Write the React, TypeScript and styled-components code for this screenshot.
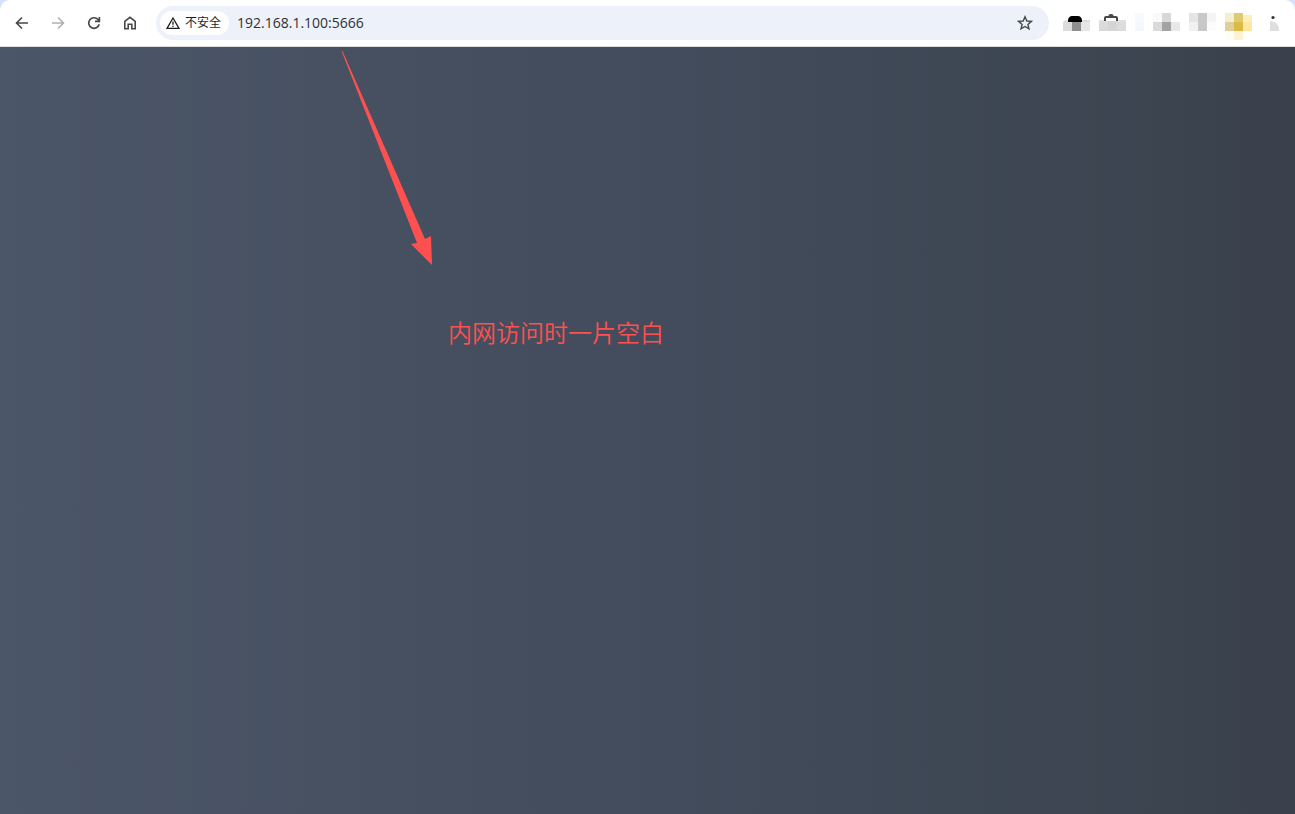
import React from "react";
import styled, { createGlobalStyle } from "styled-components";

const GlobalStyle = createGlobalStyle`
  * { box-sizing: border-box; }
  body {
    margin: 0;
    background: #d3e3fd;
    font-family: "Open Sans", "Noto Sans CJK SC", sans-serif;
  }
`;

const Page = styled.div`
  display: flex;
  flex-direction: column;
  min-height: 100vh;
`;

const Toolbar = styled.header`
  display: flex;
  align-items: center;
  gap: 12px;
  height: 47px;
  padding: 0 16px 1px 8px;
  background: #fff;
  border-bottom: 1px solid #dcdcdc;
  border-radius: 10px 10px 0 0;
`;

const Navigation = styled.nav`
  display: flex;
  gap: 8px;
`;

const IconButton = styled.button<{ $muted?: boolean }>`
  display: flex;
  align-items: center;
  justify-content: center;
  width: 28px;
  height: 28px;
  padding: 0;
  border: 0;
  border-radius: 50%;
  background: transparent;
  color: ${(p) => (p.$muted ? "#b0b0b0" : "#474747")};
`;

const AddressBar = styled.form`
  display: flex;
  flex: 1;
  align-items: center;
  height: 34px;
  padding: 0 10px 0 4px;
  border-radius: 17px;
  background: #edf1fa;
`;

const SecurityChip = styled.button`
  display: flex;
  align-items: center;
  gap: 5px;
  height: 24px;
  padding: 0 8px 0 6px;
  border: 0;
  border-radius: 12px;
  background: #fff;
  color: #1f1f1f;
  font-family: inherit;
  font-size: 12px;
  line-height: 24px;
`;

const AddressInput = styled.input`
  flex: 1;
  min-width: 0;
  padding: 0 8px;
  border: 0;
  outline: 0;
  background: transparent;
  color: #303030;
  font-family: inherit;
  font-size: 14px;
  line-height: 24px;
`;

const Extensions = styled.div`
  display: flex;
  gap: 9px;
  margin-left: 2px;
`;

const ExtensionButton = styled.button<{ $narrow?: boolean }>`
  width: ${(p) => (p.$narrow ? "9px" : "27px")};
  height: 28px;
  padding: 0;
  border: 0;
  background: transparent;

  svg {
    display: block;
    overflow: visible;
  }
`;

const MenuButton = styled(ExtensionButton)`
  margin-left: 9px;
`;

const Viewport = styled.main`
  position: relative;
  flex: 1;
  background: linear-gradient(90deg, #4b5668 0%, #434c5c 50%, #3b444f 90%, #3a404c 100%);
`;

const Arrow = styled.svg`
  position: absolute;
  top: 4px;
  left: 341px;
`;

const Note = styled.p`
  position: absolute;
  top: 267px;
  left: 448px;
  margin: 0;
  color: #ff5050;
  font-family: "Noto Sans CJK SC", sans-serif;
  font-size: 24px;
  font-weight: 350;
  line-height: 36px;
  white-space: nowrap;
`;

type Cell = [x: number, y: number, w: number, h: number, fill: string];

const Mosaic = ({ cells, width = 27, children }: { cells: Cell[]; width?: number; children?: React.ReactNode }) => (
  <svg width={width} height="28" viewBox={`0 0 ${width} 28`} aria-hidden="true">
    {children}
    <g shapeRendering="crispEdges">
      {cells.map(([x, y, w, h, fill]) => (
        <rect key={`${x}-${y}`} x={x} y={y} width={w} height={h} fill={fill} />
      ))}
    </g>
  </svg>
);

const Stroke = ({ d, size = 16, width = 1.6 }: { d: string; size?: number; width?: number }) => (
  <svg width={size} height={size} viewBox="0 0 16 16" fill="none" stroke="currentColor" strokeWidth={width} aria-hidden="true">
    <path d={d} />
  </svg>
);

export default function App() {
  return (
    <Page>
      <GlobalStyle />
      <Toolbar>
        <Navigation aria-label="导航">
          <IconButton aria-label="后退"><Stroke d="M14 8H3M8 2.5 2.5 8 8 13.5" /></IconButton>
          <IconButton $muted aria-label="前进"><Stroke d="M2 8h11M8 2.5 13.5 8 8 13.5" /></IconButton>
          <IconButton aria-label="重新加载">
            <Stroke d="M13.2 9.2A5.3 5.3 0 1 1 12.1 4.6L13 5.6M13.4 2V6.4H9" />
          </IconButton>
          <IconButton aria-label="主页">
            <Stroke d="M2.8 6.3 8 2.3l5.2 4v7.5H9.8V9.2H6.2v4.6H2.8Z" />
          </IconButton>
        </Navigation>
        <AddressBar>
          <SecurityChip type="button">
            <svg width="14" height="14" viewBox="0 0 14 14" fill="none" stroke="currentColor" strokeWidth="1.3" aria-hidden="true">
              <path d="M7 2 13 12.3H1ZM7 5.5v3.3M7 9.7v1.3" />
            </svg>
            不安全
          </SecurityChip>
          <AddressInput aria-label="地址" defaultValue="192.168.1.100:5666" />
          <IconButton type="button" aria-label="添加书签">
            <Stroke width={1.4} d="m8 1.8 1.8 4.2 4.6.4-3.5 3 1.1 4.5L8 11.5l-4 2.4 1.1-4.5-3.5-3L6.2 6Z" />
          </IconButton>
        </AddressBar>
        <Extensions>
          <ExtensionButton aria-label="扩展程序 1">
            <Mosaic cells={[[0, 13, 9, 9, "#dcdcdc"], [9, 13, 9, 9, "#8f8f8f"], [18, 13, 9, 9, "#e6e6e6"]]}>
              <path d="M0 13Q2 11 6 11H27V13Z" fill="#dcdcdc" />
              <path d="M5 11Q6 7 9 7H15Q18 7 19 11V13H5Z" fill="#000" />
            </Mosaic>
          </ExtensionButton>
          <ExtensionButton aria-label="扩展程序 2">
            <Mosaic cells={[[0, 13, 9, 9, "#dadada"], [9, 12, 9, 10, "#d6d6d6"], [18, 13, 9, 9, "#dcdcdc"]]}>
              <path d="M0 11H27V13H0Z" fill="#e0e0e0" />
              <path d="M6 8H18V12H6Z" fill="#fff" />
              <path d="M6 12V9Q6 8 7 8H17Q18 8 18 9V12M10 7Q12 5 14 7" fill="none" stroke="#484848" strokeWidth="2" />
            </Mosaic>
          </ExtensionButton>
          <ExtensionButton $narrow aria-label="扩展程序 3">
            <Mosaic width={9} cells={[[0, 4, 9, 9, "#f6faff"], [0, 13, 9, 9, "#f3f8ff"]]} />
          </ExtensionButton>
          <ExtensionButton aria-label="扩展程序 4">
            <Mosaic cells={[[0, 4, 9, 9, "#fafafa"], [9, 4, 9, 9, "#d8d8d8"], [0, 13, 9, 9, "#dadada"], [9, 13, 9, 9, "#a3a3a3"], [18, 13, 9, 9, "#e8e8e8"]]} />
          </ExtensionButton>
          <ExtensionButton aria-label="扩展程序 5">
            <Mosaic cells={[[0, 4, 9, 9, "#e5e5e5"], [9, 4, 9, 9, "#c8c8c8"], [18, 4, 9, 9, "#f4f4f4"], [0, 13, 9, 9, "#f1f1f1"], [9, 13, 9, 9, "#c8c8c8"], [18, 13, 9, 9, "#fcfcfc"]]} />
          </ExtensionButton>
          <ExtensionButton aria-label="扩展程序 6">
            <Mosaic cells={[[0, 4, 9, 9, "#f5efd0"], [9, 4, 9, 9, "#dccb70"], [18, 6, 9, 7, "#fcefbe"], [0, 13, 9, 9, "#dfcf9d"], [9, 13, 9, 9, "#dcba43"], [18, 13, 9, 9, "#ffe7a0"], [0, 22, 9, 9, "#fffdf7"], [9, 22, 9, 9, "#fdf2d2"]]} />
          </ExtensionButton>
          <MenuButton $narrow aria-label="菜单">
            <svg width="9" height="28" viewBox="0 0 9 28" aria-hidden="true">
              <circle cx="3" cy="8.5" r="1.6" fill="#303030" />
              <path d="M0 12Q7 12 9 19V22H0Z" fill="#dfdfdf" />
            </svg>
          </MenuButton>
        </Extensions>
      </Toolbar>
      <Viewport>
        <Arrow width="92" height="216" viewBox="0 0 92 216" fill="#ff5050" aria-hidden="true">
          <path d="M.5 0h1L84 188l6-3 1 29L70 193l6-1Z" />
        </Arrow>
        <Note>内网访问时一片空白</Note>
      </Viewport>
    </Page>
  );
}
